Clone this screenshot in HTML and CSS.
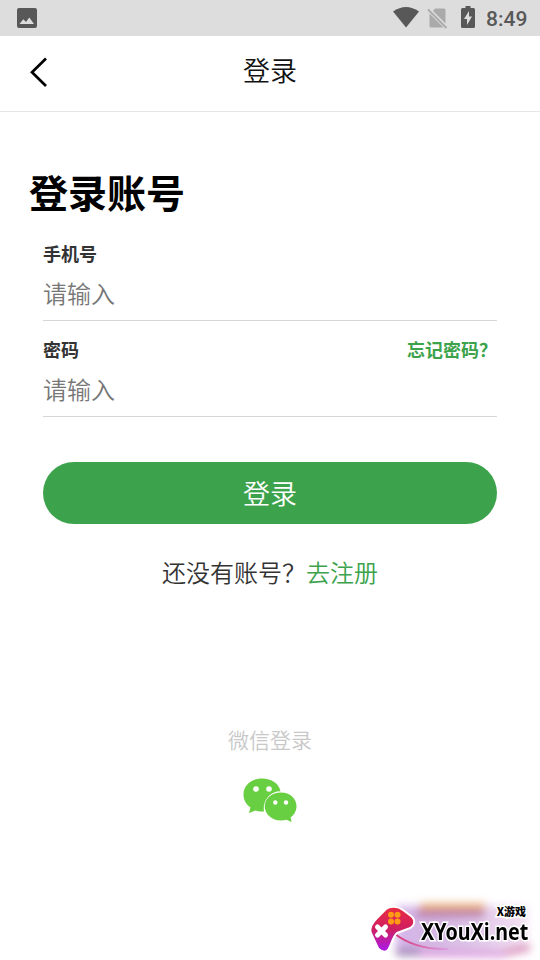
FILE: index.html
```html
<!DOCTYPE html>
<html lang="zh-CN">
<head>
<meta charset="utf-8">
<title>登录</title>
<link rel="stylesheet" href="styles.css">
</head>
<body>
<div class="status">
  <svg class="status-photo" width="20" height="20" viewBox="0 0 20 20"><path fill="#585858" fill-rule="evenodd" d="M2 0H18Q20 0 20 2V18Q20 20 18 20H2Q0 20 0 18V2Q0 0 2 0ZM2.500 16H17L12.300 9.500L9 14L6.300 11.200Z"/></svg>
  <svg class="status-wifi" width="26" height="21" viewBox="0 0 26 21"><path fill="#585858" d="M0 4.500Q13-4.500 26 4.500L13 20.500Z"/></svg>
  <svg class="status-sim" width="21" height="21" viewBox="0 0 21 21"><path fill="#aaa" d="M8 0.500H17Q18.500 0.500 18.500 2V15.500L6 3ZM2.500 5.500L16.500 19.500H4Q2.500 19.500 2.500 18Z"/><path stroke="#aaa" stroke-width="1.800" d="M1 1.500L19.500 20"/></svg>
  <svg class="status-battery" width="14" height="22" viewBox="0 0 14 22"><path fill="#585858" d="M4.500 0H9.500V2H12.500Q14 2 14 3.500V20.500Q14 22 12.500 22H1.500Q0 22 0 20.500V3.500Q0 2 1.500 2H4.500Z"/><path fill="#ddd" d="M8 5L3 13H6V19L11 10.500H8Z"/></svg>
  <span class="time">8:49</span>
</div>
<header class="nav">
  <svg class="back" width="20" height="32" viewBox="0 0 20 32"><path fill="none" stroke="#000" stroke-width="2.700" d="M17 2.500L3 16.200L17 30"/></svg>
  <span>登录</span>
</header>
<main class="page">
  <h1>登录账号</h1>
  <form class="form">
    <div class="field">
      <div class="label"><span>手机号</span></div>
      <input type="text" placeholder="请输入">
    </div>
    <div class="field">
      <div class="label"><span>密码</span><a class="forgot">忘记密码？</a></div>
      <input type="password" placeholder="请输入">
    </div>
    <button type="button">登录</button>
  </form>
  <p class="register">还没有账号？<a>去注册</a></p>
  <div class="wechat">
    <span>微信登录</span>
    <svg width="54" height="45" viewBox="0 0 54 45"><path fill="#69cf42" d="M19 0.500C8.500 0.500 0.500 7.500 0.500 16.500C0.500 22 3.200 26.500 7.500 29.500L6 35L12.500 32.500C15 33.500 18 33.500 21 33.500C19 22 28 13 37.500 13.200C36 5.500 28.500 0.500 19 0.500Z"/><path fill="#69cf42" d="M38 14.500C28.800 14.500 21.700 20.700 21.700 28.200C21.700 36 28.800 42.500 38 42.500C40 42.500 41.800 42.200 43.500 41.700L48.500 44L47.700 39.300C51.300 36.800 53.500 32.700 53.500 28.200C53.500 20.700 47 14.500 38 14.500Z"/><g fill="#fff"><circle cx="13" cy="11" r="2.800"/><circle cx="26" cy="11" r="2.800"/><circle cx="32.300" cy="24.500" r="2.200"/><circle cx="43" cy="24.500" r="2.200"/></g></svg>
  </div>
</main>
<div class="watermark">
  <svg class="mark-art" width="180" height="70" viewBox="0 0 180 70">
    <defs>
      <linearGradient id="pad" x1="0" y1="0" x2="0" y2="1"><stop offset="0" stop-color="#e92c42"/><stop offset=".5" stop-color="#cf1f61"/><stop offset="1" stop-color="#a81af0"/></linearGradient>
      <linearGradient id="haze"><stop offset="0" stop-color="#d6b5eb"/><stop offset=".3" stop-color="#d4b8e2"/><stop offset=".6" stop-color="#dfc6e8"/><stop offset="1" stop-color="#f5e3f4"/></linearGradient>
      <linearGradient id="tail"><stop offset="0" stop-color="#d93475"/><stop offset="1" stop-color="#dca0e5"/></linearGradient>
      <filter id="soft" x="-20%" y="-50%" width="140%" height="200%"><feGaussianBlur stdDeviation="4"/></filter>
    </defs>
    <g filter="url(#soft)">
      <rect x="36" y="16" width="132" height="48" fill="url(#haze)"/>
      <path stroke="#e8ab75" stroke-width="7" d="M60 17H125"/>
      <path stroke="#b87caf" stroke-width="7" d="M56 24H124"/>
      <path stroke="#a488b8" stroke-width="8" d="M36 62H60"/>
      <path stroke="#dda0df" stroke-width="7" d="M60 64H145"/>
      <path stroke="#d784b4" stroke-width="6" d="M145 63L170 57"/>
    </g>
    <path fill="none" stroke="url(#tail)" stroke-width="2" d="M35 44Q56 60 88 59"/>
    <path fill="url(#pad)" stroke="#fff" stroke-width="2" d="M26 19C30 16 38 16 43 20L51 26C56 30 55 36 49 38.500L37 43C32 47 31 58 27 61C23 63 18 60 17 56L10.500 42C9.500 36 13 32 17 28Z"/>
    <g fill="#ff9b14"><circle cx="31" cy="24.800" r="3"/><circle cx="37.500" cy="24.800" r="3"/><circle cx="31" cy="31.500" r="3"/><circle cx="37.500" cy="31.500" r="3"/></g>
    <path stroke="#fff" stroke-width="5" stroke-linecap="round" d="M17.500 37L25.500 45M25.500 37L17.500 45"/>
  </svg>
  <span class="mark-small">X游戏</span>
  <span class="mark-name">XYouXi.net</span>
</div>
</body>
</html>
```
FILE: styles.css
```css
* { box-sizing: border-box; }
body {
  margin: 0;
  height: 960px;
  overflow: hidden;
  position: relative;
  background: #fff;
  color: #333;
  font-family: "Noto Sans CJK SC", sans-serif;
  font-weight: 350;
}
.status {
  height: 36px;
  padding: 0 12px 0 17px;
  display: flex;
  align-items: center;
  background: #ddd;
}
.status-wifi { margin: 0 0 1px auto; }
.status-sim { margin: 0 0 0 8px; }
.status-battery { margin: 0 0 2px 13px; }
.time {
  width: 42px;
  margin-left: 11px;
  color: #585858;
  font: 500 21px/36px Roboto, sans-serif;
  padding-top: 1px;
  white-space: nowrap;
}
.nav {
  height: 76px;
  padding: 0 29px 8px;
  display: grid;
  grid-template-columns: 20px 1fr 20px;
  align-items: center;
  border-bottom: 1px solid #e6e6e6;
  color: #111;
  font-size: 27px;
  line-height: 40px;
  text-align: center;
}
.back { margin-top: 5px; }
.page { padding: 50px 29px 0; }
h1 {
  margin: 0;
  color: #000;
  font-size: 39px;
  font-weight: 700;
  line-height: 58px;
}
.form { padding: 19px 14px 0; }
.field {
  height: 96px;
  padding-bottom: 15px;
}
.label {
  display: flex;
  justify-content: space-between;
  font-size: 18px;
  font-weight: 700;
  line-height: 28px;
}
.forgot { color: #3ca34c; }
input {
  display: block;
  width: 100%;
  height: 54px;
  padding: 0 0 3px;
  border: 0;
  border-bottom: 1px solid #d6d6d6;
  outline: 0;
  background: none;
  font: 350 24px/36px "Noto Sans CJK SC", sans-serif;
}
input::placeholder { color: #777; }
button {
  display: block;
  width: 100%;
  height: 61.5px;
  margin-top: 31px;
  padding: 0;
  border: 0;
  border-radius: 31px;
  background: #3ca34c;
  color: #fff;
  font: 350 27px/61px "Noto Sans CJK SC", sans-serif;
}
.register {
  margin: 30.5px 0 0;
  font-size: 24px;
  line-height: 36px;
  text-align: center;
}
.register a { color: #3ca34c; }
.wechat {
  margin-top: 134px;
  display: flex;
  flex-direction: column;
  align-items: center;
  gap: 23px;
  color: #c8c8c8;
  font-size: 21px;
  line-height: 31px;
}
.watermark {
  position: absolute;
  right: 0;
  bottom: 0;
  width: 180px;
  height: 70px;
  padding: 15px 14px 0 61px;
  display: flex;
  flex-direction: column;
  align-items: flex-end;
}
.mark-art {
  position: absolute;
  inset: 0;
}
.mark-small, .mark-name {
  position: relative;
  color: #000;
  -webkit-text-stroke: 3px #fff;
  paint-order: stroke fill;
  white-space: nowrap;
}
.mark-small { font: 900 11px/13px "Noto Sans CJK SC", sans-serif; }
.mark-name {
  align-self: flex-start;
  font: 700 24px/25px "Noto Sans", sans-serif;
  transform: scaleX(0.82);
  transform-origin: left;
}
```
